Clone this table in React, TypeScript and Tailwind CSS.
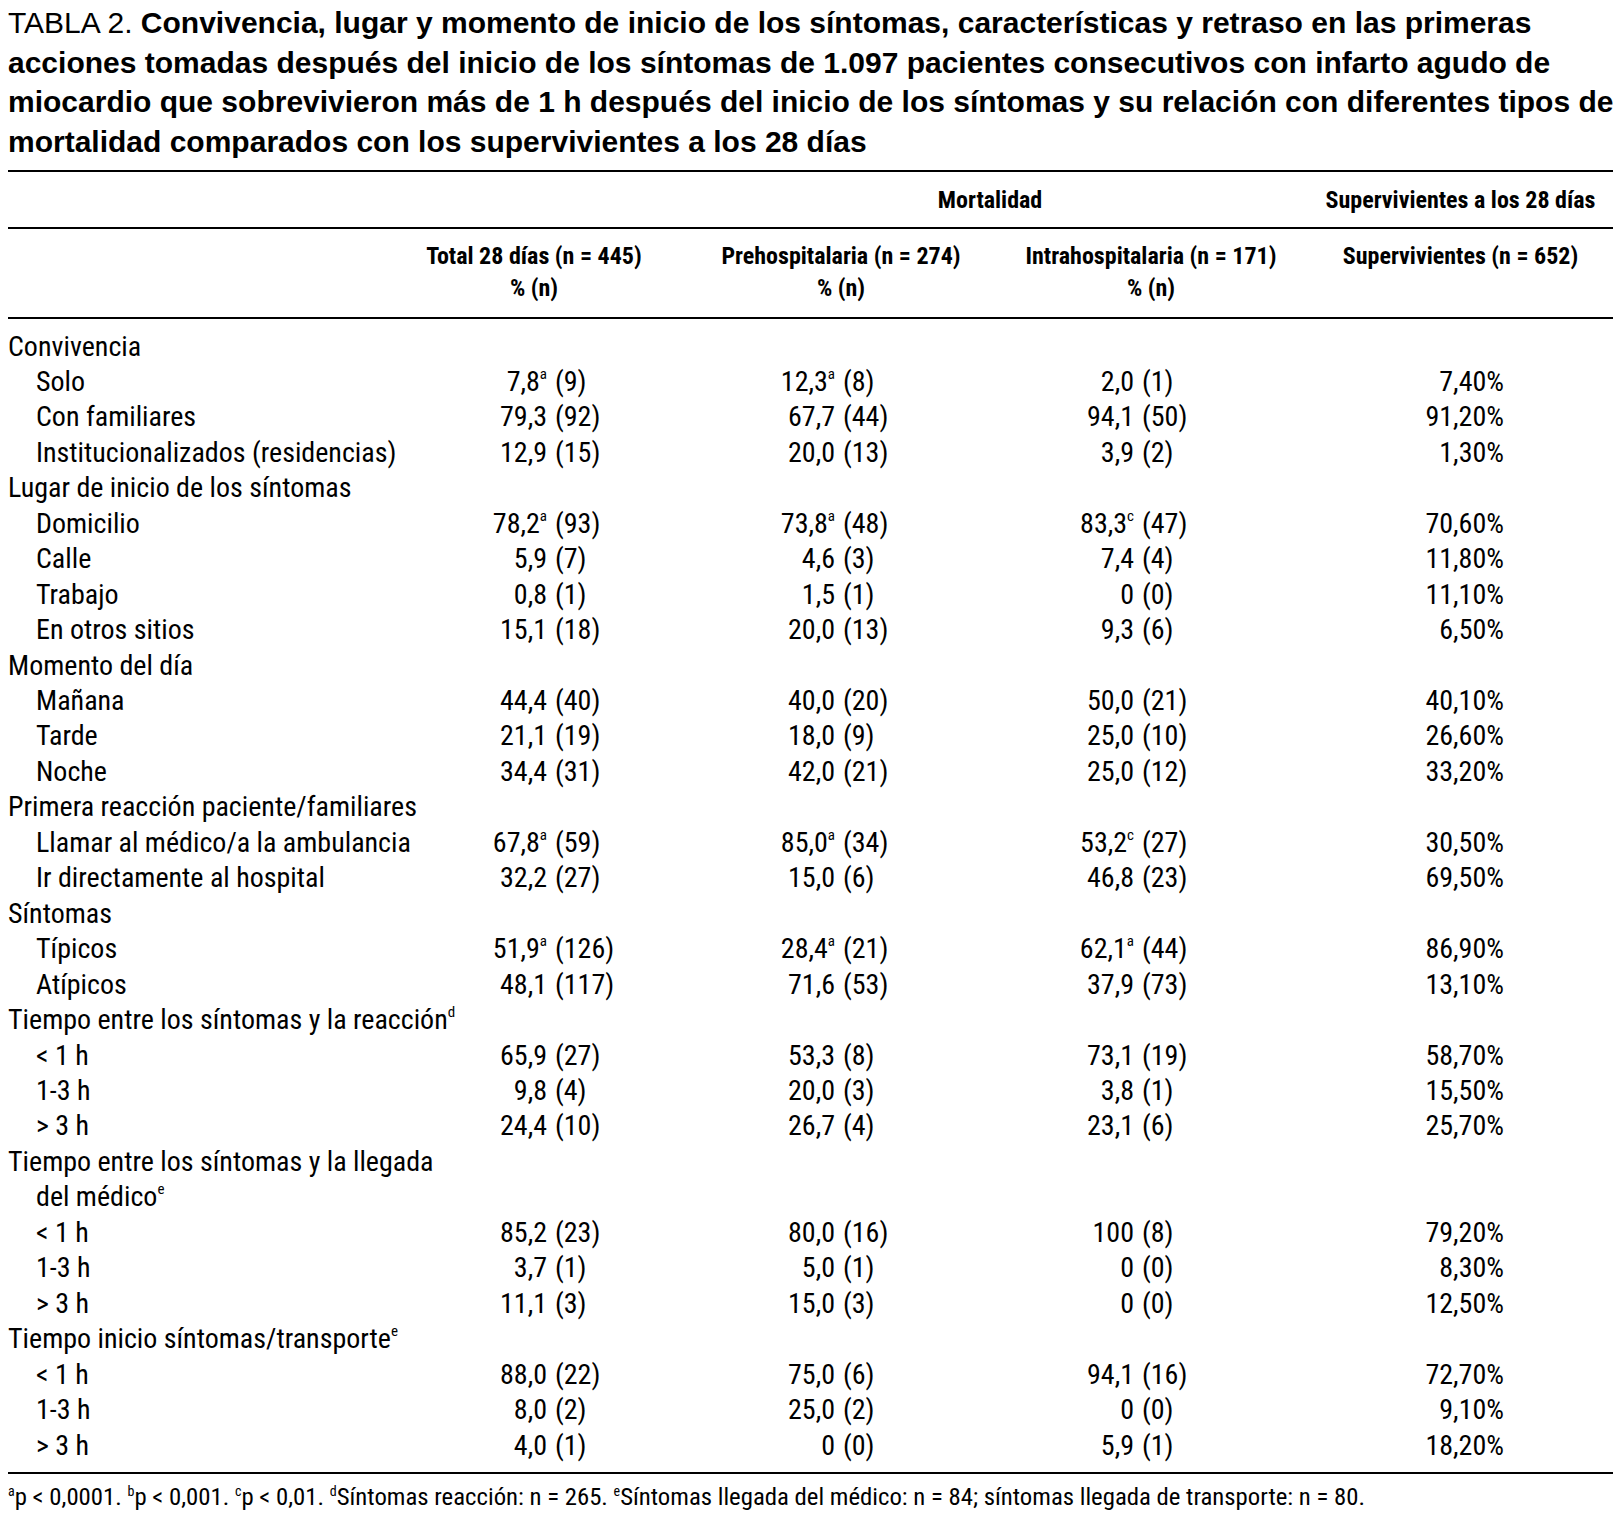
import React from "react";

type Cell = { v: string; s?: string; n: string };
type Row = {
  label: string;
  sup?: string;
  sub?: boolean;
  cells?: [Cell, Cell, Cell];
  pct?: string;
};

const c = (v: string, n: string, s?: string): Cell => ({ v, n, s });

const rows: Row[] = [
  { label: "Convivencia" },
  { label: "Solo", sub: true, cells: [c("7,8", "(9)", "a"), c("12,3", "(8)", "a"), c("2,0", "(1)")], pct: "7,40%" },
  { label: "Con familiares", sub: true, cells: [c("79,3", "(92)"), c("67,7", "(44)"), c("94,1", "(50)")], pct: "91,20%" },
  { label: "Institucionalizados (residencias)", sub: true, cells: [c("12,9", "(15)"), c("20,0", "(13)"), c("3,9", "(2)")], pct: "1,30%" },
  { label: "Lugar de inicio de los síntomas" },
  { label: "Domicilio", sub: true, cells: [c("78,2", "(93)", "a"), c("73,8", "(48)", "a"), c("83,3", "(47)", "c")], pct: "70,60%" },
  { label: "Calle", sub: true, cells: [c("5,9", "(7)"), c("4,6", "(3)"), c("7,4", "(4)")], pct: "11,80%" },
  { label: "Trabajo", sub: true, cells: [c("0,8", "(1)"), c("1,5", "(1)"), c("0", "(0)")], pct: "11,10%" },
  { label: "En otros sitios", sub: true, cells: [c("15,1", "(18)"), c("20,0", "(13)"), c("9,3", "(6)")], pct: "6,50%" },
  { label: "Momento del día" },
  { label: "Mañana", sub: true, cells: [c("44,4", "(40)"), c("40,0", "(20)"), c("50,0", "(21)")], pct: "40,10%" },
  { label: "Tarde", sub: true, cells: [c("21,1", "(19)"), c("18,0", "(9)"), c("25,0", "(10)")], pct: "26,60%" },
  { label: "Noche", sub: true, cells: [c("34,4", "(31)"), c("42,0", "(21)"), c("25,0", "(12)")], pct: "33,20%" },
  { label: "Primera reacción paciente/familiares" },
  { label: "Llamar al médico/a la ambulancia", sub: true, cells: [c("67,8", "(59)", "a"), c("85,0", "(34)", "a"), c("53,2", "(27)", "c")], pct: "30,50%" },
  { label: "Ir directamente al hospital", sub: true, cells: [c("32,2", "(27)"), c("15,0", "(6)"), c("46,8", "(23)")], pct: "69,50%" },
  { label: "Síntomas" },
  { label: "Típicos", sub: true, cells: [c("51,9", "(126)", "a"), c("28,4", "(21)", "a"), c("62,1", "(44)", "a")], pct: "86,90%" },
  { label: "Atípicos", sub: true, cells: [c("48,1", "(117)"), c("71,6", "(53)"), c("37,9", "(73)")], pct: "13,10%" },
  { label: "Tiempo entre los síntomas y la reacción", sup: "d" },
  { label: "< 1 h", sub: true, cells: [c("65,9", "(27)"), c("53,3", "(8)"), c("73,1", "(19)")], pct: "58,70%" },
  { label: "1-3 h", sub: true, cells: [c("9,8", "(4)"), c("20,0", "(3)"), c("3,8", "(1)")], pct: "15,50%" },
  { label: "> 3 h", sub: true, cells: [c("24,4", "(10)"), c("26,7", "(4)"), c("23,1", "(6)")], pct: "25,70%" },
  { label: "Tiempo entre los síntomas y la llegada" },
  { label: "del médico", sup: "e", sub: true },
  { label: "< 1 h", sub: true, cells: [c("85,2", "(23)"), c("80,0", "(16)"), c("100", "(8)")], pct: "79,20%" },
  { label: "1-3 h", sub: true, cells: [c("3,7", "(1)"), c("5,0", "(1)"), c("0", "(0)")], pct: "8,30%" },
  { label: "> 3 h", sub: true, cells: [c("11,1", "(3)"), c("15,0", "(3)"), c("0", "(0)")], pct: "12,50%" },
  { label: "Tiempo inicio síntomas/transporte", sup: "e" },
  { label: "< 1 h", sub: true, cells: [c("88,0", "(22)"), c("75,0", "(6)"), c("94,1", "(16)")], pct: "72,70%" },
  { label: "1-3 h", sub: true, cells: [c("8,0", "(2)"), c("25,0", "(2)"), c("0", "(0)")], pct: "9,10%" },
  { label: "> 3 h", sub: true, cells: [c("4,0", "(1)"), c("0", "(0)"), c("5,9", "(1)")], pct: "18,20%" },
];

// number box widths per column, so the "(" lines up inside each column
const boxW = ["w-[167px]", "w-[147px]", "w-[140px]"];

function Sup({ children }: { children: React.ReactNode }) {
  return <sup className="relative -top-[12px] align-baseline text-[15px]">{children}</sup>;
}

function Sup2({ children }: { children: React.ReactNode }) {
  return <sup className="relative -top-[9px] align-baseline text-[14px]">{children}</sup>;
}

function DataCell({ cell, box }: { cell: Cell; box: string }) {
  return (
    <div className="flex whitespace-nowrap">
      <span className={`${box} text-right`}>
        {cell.v}
        {cell.s && <Sup>{cell.s}</Sup>}
      </span>
      <span className="ml-[8px]">{cell.n}</span>
    </div>
  );
}

const grid = "grid grid-cols-[372px_308px_306px_314px_305px]";

export default function App() {
  return (
    <div className="min-h-screen bg-white text-black font-['Roboto',sans-serif] font-stretch-condensed">
      <div className="ml-[8px] w-[1605px] pt-[3px]">
        {/* Caption */}
        <div className="font-['Liberation_Sans',Arial,sans-serif] font-stretch-normal text-[30px] leading-[39.5px]">
          <div className="whitespace-nowrap">
            TABLA 2. <span className="font-bold">Convivencia, lugar y momento de inicio de los síntomas, características y retraso en las primeras</span>
          </div>
          <div className="whitespace-nowrap font-bold">
            acciones tomadas después del inicio de los síntomas de 1.097 pacientes consecutivos con infarto agudo de
          </div>
          <div className="whitespace-nowrap font-bold">
            miocardio que sobrevivieron más de 1 h después del inicio de los síntomas y su relación con diferentes tipos de
          </div>
          <div className="whitespace-nowrap font-bold">mortalidad comparados con los supervivientes a los 28 días</div>
        </div>

        {/* Header */}
        <div className="mt-[9px] border-t-2 border-black" />
        <div className={`${grid} h-[55px] items-center text-[24px] font-bold`}>
          <div className="col-start-3 col-span-2 pr-[16px] text-center">Mortalidad</div>
          <div className="text-center">Supervivientes a los 28 días</div>
        </div>
        <div className="border-t-2 border-black" />
        <div className={`${grid} pt-[11px] pb-[13px] text-[24px] font-bold leading-[32px]`}>
          <div />
          <div className="text-center">
            Total 28 días (n = 445)
            <br />% (n)
          </div>
          <div className="text-center">
            Prehospitalaria (n = 274)
            <br />% (n)
          </div>
          <div className="text-center">
            Intrahospitalaria (n = 171)
            <br />% (n)
          </div>
          <div className="text-center">Supervivientes (n = 652)</div>
        </div>
        <div className="border-t-2 border-black" />

        {/* Body */}
        <div className="pt-[9.5px] pb-[9px] text-[28px] leading-[35.45px]">
          {rows.map((r, i) => (
            <div key={i} className={grid}>
              <div className={`whitespace-nowrap ${r.sub ? "pl-[28px]" : ""}`}>
                {r.label}
                {r.sup && <Sup>{r.sup}</Sup>}
              </div>
              {r.cells ? (
                <>
                  {r.cells.map((cell, j) => (
                    <DataCell key={j} cell={cell} box={boxW[j]} />
                  ))}
                  <div className="pr-[109px] text-right">{r.pct}</div>
                </>
              ) : null}
            </div>
          ))}
        </div>
        <div className="border-t-2 border-black" />

        {/* Footnote */}
        <div className="mt-[8px] whitespace-nowrap text-[24.75px] leading-[30px]">
          <Sup2>a</Sup2>p &lt; 0,0001. <Sup2>b</Sup2>p &lt; 0,001. <Sup2>c</Sup2>p &lt; 0,01. <Sup2>d</Sup2>Síntomas
          reacción: n = 265. <Sup2>e</Sup2>Síntomas llegada del médico: n = 84; síntomas llegada de transporte: n = 80.
        </div>
      </div>
    </div>
  );
}
